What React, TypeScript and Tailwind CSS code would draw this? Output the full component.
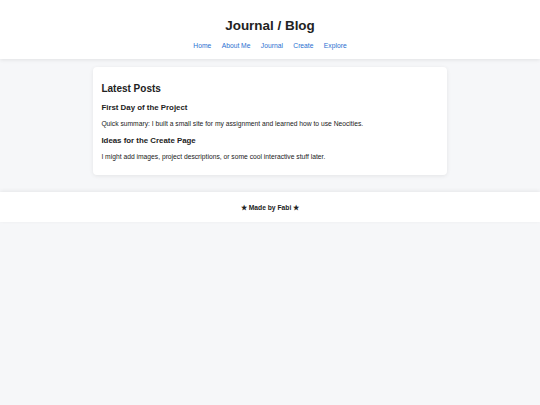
const navLinks = ['Home', 'About Me', 'Journal', 'Create', 'Explore'];

const posts = [
  {
    title: 'First Day of the Project',
    body: 'Quick summary: I built a small site for my assignment and learned how to use Neocities.',
  },
  {
    title: 'Ideas for the Create Page',
    body: 'I might add images, project descriptions, or some cool interactive stuff later.',
  },
];

export default function App() {
  return (
    <div
      className="min-h-[405px] bg-[#f6f7f9] text-[#222222]"
      style={{ fontFamily: '"Liberation Sans", Arial, sans-serif' }}
    >
      {/* Header */}
      <header className="relative z-10 bg-white pt-[17.6px] pb-[9.1px] text-center shadow-[0_1px_4px_rgba(0,0,0,0.09)]">
        <h1 className="text-[13.44px] leading-[15.46px] font-bold">Journal / Blog</h1>
        <nav className="mt-[8.6px] flex justify-center gap-[10.4px] text-[6.72px] leading-[8px]">
          {navLinks.map((link) => (
            <a key={link} href="#" className="text-[#2a6fd0]">
              {link}
            </a>
          ))}
        </nav>
      </header>

      {/* Main */}
      <main className="pt-[8.5px] pb-[16.6px]">
        <section className="mx-auto w-[354px] rounded-[4px] bg-white px-[8.4px] pt-[8.4px] pb-[14.4px] shadow-[0_1px_4px_rgba(0,0,0,0.08)]">
          <h2 className="mt-[7.6px] text-[10px] leading-[11.5px] font-bold">Latest Posts</h2>
          {posts.map((post) => (
            <article key={post.title}>
              <h3 className="mt-[8.4px] text-[7.86px] leading-[9.04px] font-bold">{post.title}</h3>
              <p className="mt-[7.9px] text-[6.72px] leading-[7.73px]">{post.body}</p>
            </article>
          ))}
        </section>
      </main>

      {/* Footer */}
      <footer className="bg-white pt-[12.2px] pb-[10.5px] text-center shadow-[0_-1px_4px_rgba(0,0,0,0.07)]">
        <p className="text-[6.72px] leading-[7.73px] font-bold">★ Made by Fabi ★</p>
      </footer>
    </div>
  );
}
